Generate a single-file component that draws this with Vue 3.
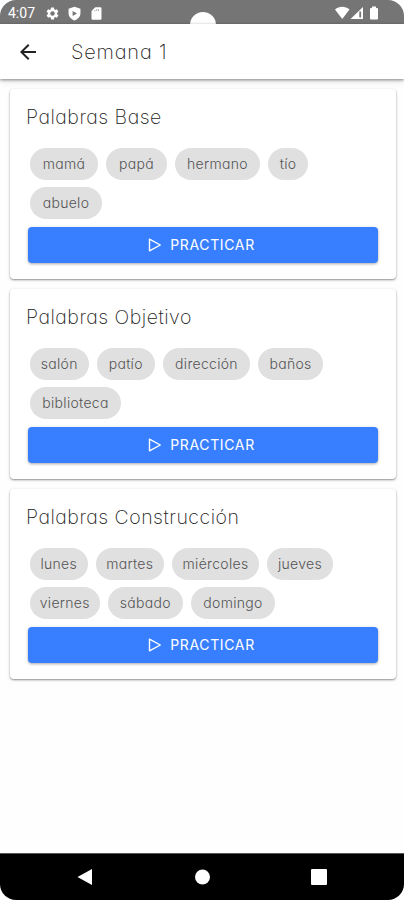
<template>
  <div class="screen">
    <header class="status-bar">
      <span class="clock">4:07</span>
      <svg
        class="status-icon gear"
        viewBox="0 0 24 24"
      >
        <path d="M19.14 12.94c.04-.3.06-.61.06-.94s-.02-.64-.07-.94l2.03-1.58a.49.49 0 0 0 .12-.61l-1.92-3.32a.49.49 0 0 0-.59-.22l-2.39.96a7 7 0 0 0-1.62-.94l-.36-2.54a.48.48 0 0 0-.48-.41h-3.84a.47.47 0 0 0-.47.41l-.36 2.54c-.59.24-1.13.57-1.62.94l-2.39-.96a.48.48 0 0 0-.59.22L2.74 8.87a.47.47 0 0 0 .12.61l2.03 1.58a7 7 0 0 0 0 1.88l-2.03 1.58a.49.49 0 0 0-.12.61l1.92 3.32c.12.22.37.29.59.22l2.39-.96c.5.38 1.03.7 1.62.94l.36 2.54c.05.24.24.41.48.41h3.84c.24 0 .44-.17.47-.41l.36-2.54a7 7 0 0 0 1.62-.94l2.39.96c.22.08.47 0 .59-.22l1.92-3.32a.47.47 0 0 0-.12-.61zM12 15.6a3.6 3.6 0 1 1 0-7.2 3.6 3.6 0 0 1 0 7.2z" />
      </svg>
      <svg
        class="status-icon shield"
        viewBox="0 0 24 24"
      >
        <path
          fill-rule="evenodd"
          d="M12 1 2.5 4.5v7c0 5.5 4 9.8 9.5 11.5 5.5-1.7 9.5-6 9.5-11.5v-7zM9 8l7 4-7 4z"
        />
      </svg>
      <svg
        class="status-icon sd"
        viewBox="0 0 24 24"
      >
        <path
          fill-rule="evenodd"
          d="M18 2h-8L4 8v12c0 1.1.9 2 2 2h12c1.1 0 2-.9 2-2V4c0-1.1-.9-2-2-2zM9 6.5h1v2H9zm3-1.500h1v3h-1zm3 0h1v3h-1z"
        />
      </svg>
      <span class="camera" />
      <svg
        class="signals"
        viewBox="0 0 44 14"
      >
        <path d="M0 3.5C4.2-.3 10.2-.3 14.5 3.5L7.250 13z" />
        <path
          fill-rule="evenodd"
          d="M28 1v12H15.5zM24.3 5.5h1.800v6h-1.800z"
        />
        <path d="M37 .5h4V2h1q1 0 1 1v9.500q0 1-1 1h-6q-1 0-1-1V3q0-1 1-1h1z" />
      </svg>
    </header>

    <nav class="toolbar">
      <svg
        class="back"
        viewBox="0 0 24 24"
      >
        <path d="M20 11H7.83l5.59-5.59L12 4l-8 8 8 8 1.41-1.41L7.83 13H20z" />
      </svg>
      <h1>Semana 1</h1>
    </nav>

    <main class="content">
      <section
        v-for="group in groups"
        :key="group.title"
        class="card"
      >
        <h2>{{ group.title }}</h2>
        <div class="chips">
          <span
            v-for="word in group.words"
            :key="word.text"
            class="chip"
            :style="{ width: `${word.width}px` }"
          >{{ word.text }}</span>
        </div>
        <button
          type="button"
          class="practice"
        >
          <svg
            class="play"
            viewBox="0 0 14 14"
          >
            <path d="M1.5 1.2v11.6L12.3 7z" />
          </svg>
          <span>PRACTICAR</span>
        </button>
      </section>
    </main>

    <footer class="nav-bar">
      <svg viewBox="0 0 16 16">
        <path d="M15 0v16L.5 8z" />
      </svg>
      <svg viewBox="0 0 16 16">
        <circle
          cx="8.5"
          cy="8"
          r="7.5"
        />
      </svg>
      <svg viewBox="0 0 16 16">
        <rect
          width="16"
          height="16"
          rx="1"
        />
      </svg>
    </footer>
  </div>
</template>

<script setup>
const groups = [
  {
    title: "Palabras Base",
    words: [
      { text: "mamá", width: 68 },
      { text: "papá", width: 61 },
      { text: "hermano", width: 85 },
      { text: "tío", width: 40 },
      { text: "abuelo", width: 72 },
    ],
  },
  {
    title: "Palabras Objetivo",
    words: [
      { text: "salón", width: 58.5 },
      { text: "patío", width: 58.5 },
      { text: "dirección", width: 87 },
      { text: "baños", width: 65 },
      { text: "biblioteca", width: 91 },
    ],
  },
  {
    title: "Palabras Construcción",
    words: [
      { text: "lunes", width: 57.5 },
      { text: "martes", width: 68.5 },
      { text: "miércoles", width: 87 },
      { text: "jueves", width: 66 },
      { text: "viernes", width: 69.5 },
      { text: "sábado", width: 75.5 },
      { text: "domingo", width: 84 },
    ],
  },
];
</script>

<style>
body {
  margin: 0;
  background: #fff;
}
</style>

<style scoped>
.screen {
  width: 404px;
  height: 900px;
  display: flex;
  flex-direction: column;
  overflow: hidden;
  background: #fff;
  font-family: "Century Gothic", Inter, sans-serif;
  font-weight: 300;
  font-feature-settings: "cv11";
  color: #222;
}

.status-bar {
  position: relative;
  box-sizing: border-box;
  height: 24px;
  flex: none;
  display: flex;
  align-items: center;
  padding: 2px 25px 0 8px;
  border-radius: 16px 16px 0 0;
  background: #757575;
  fill: #fff;
}

.clock {
  width: 37px;
  color: #fff;
  font-family: Roboto, sans-serif;
  font-size: 14px;
  font-weight: 400;
}

.status-icon {
  width: 15px;
  height: 15px;
  margin-right: 7px;
}

.camera {
  position: absolute;
  left: 190px;
  top: 12px;
  width: 26px;
  height: 26px;
  border-radius: 50%;
  background: #fff;
}

.signals {
  width: 44px;
  height: 14px;
  margin-left: auto;
}

.toolbar {
  position: relative;
  height: 55px;
  flex: none;
  display: flex;
  align-items: center;
  padding-left: 16px;
  background: #fff;
  box-shadow: 0 1px 3px rgba(0, 0, 0, 0.45), 0 3px 7px rgba(0, 0, 0, 0.08);
}

.back {
  width: 24px;
  height: 24px;
  fill: #222;
}

h1 {
  margin: 1px 0 0 31px;
  font-size: 20px;
  font-weight: 200;
  letter-spacing: 0.8px;
}

.content {
  flex: 1;
  display: flex;
  flex-direction: column;
  gap: 10px;
  padding: 10px 8px 0 10px;
  background: #fefefe;
}

.card {
  box-sizing: border-box;
  height: 190px;
  padding: 16px 18px;
  border-radius: 4px;
  background: #fff;
  box-shadow: 0 1px 2px rgba(0, 0, 0, 0.4), 0 1px 4px rgba(0, 0, 0, 0.08);
}

h2 {
  margin: 0 0 19px -2px;
  font-size: 19.5px;
  line-height: 24px;
  font-weight: 200;
  letter-spacing: 0.5px;
}

.chips {
  display: flex;
  flex-wrap: wrap;
  gap: 7.5px 8px;
  padding: 0 20px 0 2px;
}

.chip {
  height: 31.5px;
  display: flex;
  align-items: center;
  justify-content: center;
  border-radius: 16px;
  background: #e0e0e0;
  color: #555;
  font-size: 14px;
  letter-spacing: 0.3px;
}

.practice {
  width: 350px;
  height: 35.5px;
  margin-top: 8.5px;
  padding: 0 3px 0 0;
  display: flex;
  align-items: center;
  justify-content: center;
  gap: 8px;
  border: 0;
  border-radius: 4px;
  background: #387fff;
  box-shadow: 0 1px 3px rgba(0, 0, 0, 0.35);
  color: #fff;
  font: inherit;
  font-size: 14px;
  font-weight: 400;
  letter-spacing: 0.65px;
}

.play {
  width: 14px;
  height: 14px;
  fill: none;
  stroke: #fff;
  stroke-width: 1.4;
  stroke-linejoin: round;
}

.nav-bar {
  height: 47px;
  flex: none;
  box-sizing: border-box;
  display: flex;
  align-items: center;
  justify-content: space-between;
  padding: 0 77px;
  border-top: 1px solid #555;
  border-radius: 0 0 16px 16px;
  background: #000;
  fill: #fff;
}

.nav-bar svg {
  width: 16px;
  height: 16px;
}
</style>
